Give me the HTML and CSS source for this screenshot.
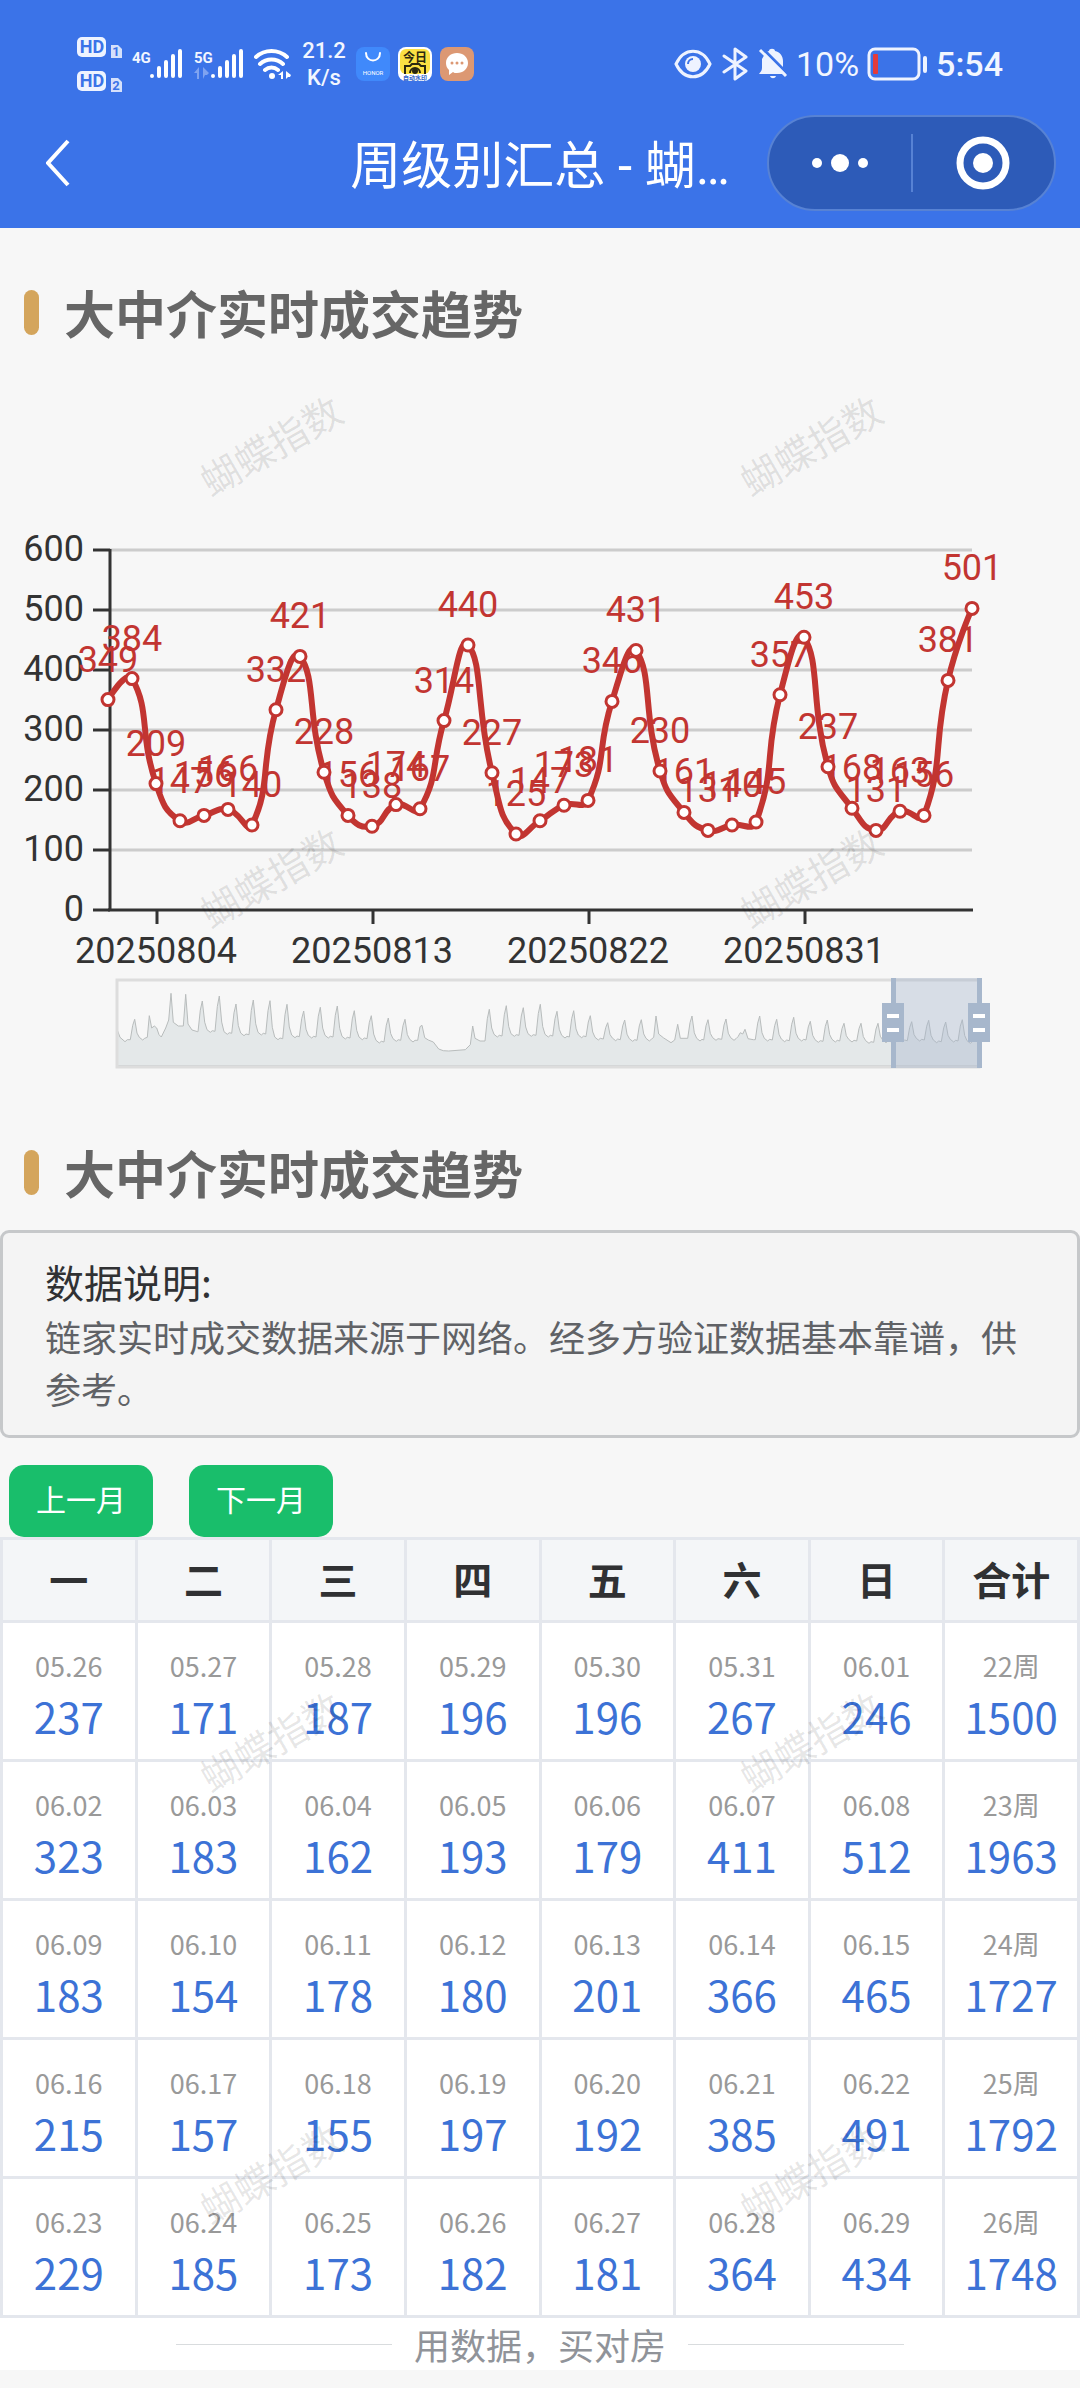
FILE: index.html
```html
<!DOCTYPE html>
<html lang="zh-CN">
<head>
  <meta charset="UTF-8">
  <title>周级别汇总 - 蝴蝶指数</title>
  <meta name="viewport" content="width=device-width, initial-scale=1">
  <link rel="stylesheet" href="styles.css">
</head>
<body>

<header class="header">
  <div class="status">
    <div class="status-left">
      <svg width="45" height="56" viewBox="0 0 45 56">
        <rect x="0" y="1" width="29" height="20" rx="5" fill="#eef3ff"/>
        <text class="hd" x="15" y="17" text-anchor="middle">HD</text>
        <path d="M34 9h7l4 4v9H34z" fill="#d5e0fb"/>
        <text class="sim" x="39" y="20" text-anchor="middle">1</text>
        <rect x="0" y="35" width="29" height="20" rx="5" fill="#eef3ff"/>
        <text class="hd" x="15" y="51" text-anchor="middle">HD</text>
        <path d="M34 42h7l4 4v10H34z" fill="#d5e0fb"/>
        <text class="sim" x="39" y="54" text-anchor="middle">2</text>
      </svg>
      <svg width="52" height="32" viewBox="0 0 52 32">
        <text class="net" x="0" y="15">4G</text>
        <path class="bars" d="M20 28v0M27 20v8M34 14v14M41 8v20M48 3v25"/>
      </svg>
      <svg width="50" height="32" viewBox="0 0 50 32">
        <text class="net" x="0" y="15">5G</text>
        <path d="M0 25l5-6v12H3v-6zM9 31V19l6 6-2 2h-2z" fill="#7fa3f0"/>
        <path class="bars" d="M19 28v0M26 20v8M33 14v14M40 8v20M47 3v25"/>
      </svg>
      <svg width="38" height="32" viewBox="0 0 38 32">
        <path d="M2 9a23 23 0 0 1 31 0M6 16a17 17 0 0 1 23 0M11 22a10 10 0 0 1 13 0" fill="none" stroke="#fff" stroke-width="4" stroke-linecap="round"/>
        <circle cx="18" cy="28" r="3" fill="#fff"/>
        <path d="M24 27l5-4v8h-2v-4zM32 31v-8l5 4-1 2h-2z" fill="#fff"/>
      </svg>
      <div class="speed">21.2<br>K/s</div>
      <div class="apps">
        <svg width="34" height="34" viewBox="0 0 34 34">
          <rect width="34" height="34" rx="8" fill="#4089fb"/>
          <path d="M10 6c0 10 14 10 14 0" fill="none" stroke="#fff" stroke-width="2" stroke-linecap="round"/>
          <text x="17" y="28" text-anchor="middle" font-size="6" fill="#fff">HONOR</text>
        </svg>
        <svg width="34" height="34" viewBox="0 0 34 34">
          <rect width="34" height="34" rx="8" fill="#fff"/>
          <rect x="2" y="2" width="30" height="25" rx="6" fill="#fbe043"/>
          <text x="17" y="15" text-anchor="middle" font-size="12" font-weight="bold" fill="#2b2710">今日</text>
          <path d="M7 27v-8h5l2-2h7l2 2h4v8M12 26a5 5 0 0 1 10 0" fill="none" stroke="#2b2710" stroke-width="2"/>
          <circle cx="17" cy="24" r="3" fill="#2b2710"/>
          <text x="17" y="33" text-anchor="middle" font-size="6" font-weight="bold" fill="#2f62c9">自动水印</text>
        </svg>
        <svg width="34" height="34" viewBox="0 0 34 34">
          <rect width="34" height="34" rx="8" fill="#dc9873"/>
          <path d="M17 6c6 0 11 4 11 10s-5 10-11 10c-2 0-3 0-4-1l-4 3v-5c-2-2-3-4-3-7 0-6 5-10 11-10z" fill="#fff"/>
          <g fill="#dc9873"><circle cx="12" cy="16" r="1.500"/><circle cx="17" cy="16" r="1.500"/><circle cx="22" cy="16" r="1.500"/></g>
        </svg>
      </div>
    </div>
    <div class="status-right">
      <svg width="38" height="30" viewBox="0 0 38 30">
        <path d="M2 15C10-2 28-2 36 15 28 32 10 32 2 15z" fill="none" stroke="#eef3ff" stroke-width="3"/>
        <circle cx="19" cy="15" r="8" fill="#eef3ff"/>
        <path d="M14 15a5 5 0 0 1 5-5" fill="none" stroke="#3b73e8" stroke-width="2"/>
      </svg>
      <svg width="30" height="34" viewBox="0 0 30 34">
        <path d="M4 9l22 15-11 8V2l11 8L4 25" fill="none" stroke="#eef3ff" stroke-width="3" stroke-linejoin="round" stroke-linecap="round"/>
      </svg>
      <svg width="30" height="34" viewBox="0 0 30 34">
        <path d="M8 5l3-1c0-3 6-3 6 0 5 1 8 5 8 10v8l3 5H1c1-2 3-3 3-6V12zM12 29h6c-1 3-5 3-6 0z" fill="#eef3ff"/>
        <path d="M4 1l26 26" stroke="#3b73e8" stroke-width="3"/>
        <path d="M2 3l26 26" stroke="#eef3ff" stroke-width="3"/>
      </svg>
      <span>10%</span>
      <svg width="61" height="34" viewBox="0 0 61 34">
        <rect x="2" y="2" width="50" height="30" rx="6" fill="none" stroke="#eef3ff" stroke-width="3"/>
        <rect x="6" y="7" width="5" height="20" rx="1" fill="#e33b3b"/>
        <path d="M58 11v13" stroke="#eef3ff" stroke-width="4" stroke-linecap="round"/>
      </svg>
      <span class="time">5:54</span>
    </div>
  </div>

  <div class="nav">
    <button class="back" aria-label="返回">
      <svg width="24" height="48" viewBox="0 0 24 48"><path d="M22 2L2 24l20 22" fill="none" stroke="#fff" stroke-width="4"/></svg>
    </button>
    <h1>周级别汇总 - 蝴…</h1>
    <div class="capsule">
      <button aria-label="更多">
        <svg width="58" height="20" viewBox="0 0 58 20" fill="#fff"><circle cx="6" cy="10" r="5"/><circle cx="29" cy="10" r="9"/><circle cx="52" cy="10" r="5"/></svg>
      </button>
      <button aria-label="关闭">
        <svg width="54" height="54" viewBox="0 0 54 54"><circle cx="27" cy="27" r="23" fill="none" stroke="#fff" stroke-width="7"/><circle cx="27" cy="27" r="10" fill="#fff"/></svg>
      </button>
    </div>
  </div>
</header>

<main class="main">
  <h2>大中介实时成交趋势</h2>
  <svg id="chart" class="chart" viewBox="0 0 1080 718"></svg>

  <h2>大中介实时成交趋势</h2>
  <div class="info">
    <p class="info-title">数据说明:</p>
    <p>链家实时成交数据来源于网络。经多方验证数据基本靠谱，供参考。</p>
  </div>

  <div class="actions">
    <button type="button">上一月</button>
    <button type="button">下一月</button>
  </div>

  <table class="calendar">
    <thead>
      <tr><th>一</th><th>二</th><th>三</th><th>四</th><th>五</th><th>六</th><th>日</th><th>合计</th></tr>
    </thead>
    <tbody>
      <tr>
        <td><span>05.26</span><b>237</b></td><td><span>05.27</span><b>171</b></td><td><span>05.28</span><b>187</b></td><td><span>05.29</span><b>196</b></td>
        <td><span>05.30</span><b>196</b></td><td><span>05.31</span><b>267</b></td><td><span>06.01</span><b>246</b></td><td><span>22周</span><b>1500</b></td>
      </tr>
      <tr>
        <td><span>06.02</span><b>323</b></td><td><span>06.03</span><b>183</b></td><td><span>06.04</span><b>162</b></td><td><span>06.05</span><b>193</b></td>
        <td><span>06.06</span><b>179</b></td><td><span>06.07</span><b>411</b></td><td><span>06.08</span><b>512</b></td><td><span>23周</span><b>1963</b></td>
      </tr>
      <tr>
        <td><span>06.09</span><b>183</b></td><td><span>06.10</span><b>154</b></td><td><span>06.11</span><b>178</b></td><td><span>06.12</span><b>180</b></td>
        <td><span>06.13</span><b>201</b></td><td><span>06.14</span><b>366</b></td><td><span>06.15</span><b>465</b></td><td><span>24周</span><b>1727</b></td>
      </tr>
      <tr>
        <td><span>06.16</span><b>215</b></td><td><span>06.17</span><b>157</b></td><td><span>06.18</span><b>155</b></td><td><span>06.19</span><b>197</b></td>
        <td><span>06.20</span><b>192</b></td><td><span>06.21</span><b>385</b></td><td><span>06.22</span><b>491</b></td><td><span>25周</span><b>1792</b></td>
      </tr>
      <tr>
        <td><span>06.23</span><b>229</b></td><td><span>06.24</span><b>185</b></td><td><span>06.25</span><b>173</b></td><td><span>06.26</span><b>182</b></td>
        <td><span>06.27</span><b>181</b></td><td><span>06.28</span><b>364</b></td><td><span>06.29</span><b>434</b></td><td><span>26周</span><b>1748</b></td>
      </tr>
    </tbody>
  </table>

  <footer class="slogan">用数据，买对房</footer>

  <div class="watermark" aria-hidden="true">
    <span>蝴蝶指数</span><span>蝴蝶指数</span>
    <span>蝴蝶指数</span><span>蝴蝶指数</span>
    <span>蝴蝶指数</span><span>蝴蝶指数</span>
    <span>蝴蝶指数</span><span>蝴蝶指数</span>
    <span>蝴蝶指数</span><span>蝴蝶指数</span>
  </div>
</main>

<script src="chart.js"></script>
</body>
</html>
```

FILE: styles.css
```css
* {
  box-sizing: border-box;
}
body {
  margin: 0;
  min-height: 100vh;
  background: #f7f7f7;
  color: #303133;
  font-family: "Noto Sans CJK SC", sans-serif;
}
h1, h2, p {
  margin: 0;
}
button {
  padding: 0;
  border: none;
  background: none;
  color: #fff;
  font-family: inherit;
  cursor: pointer;
}
svg {
  display: block;
}

/* 顶部状态栏和导航 */
.header {
  padding-top: 34px;
  background: #3b73e8;
  color: #f2f6ff;
}
.status {
  display: flex;
  justify-content: space-between;
  height: 60px;
  padding: 0 77px;
  font-family: Roboto, "Noto Sans CJK SC", sans-serif;
}
.status-left {
  display: flex;
  align-items: center;
  gap: 10px;
}
.status-right {
  display: flex;
  align-items: center;
  gap: 8px;
  font-size: 34px;
}
.time {
  font-weight: 500;
}
.hd {
  font-size: 18px;
  font-weight: bold;
  fill: #3b73e8;
}
.sim {
  font-size: 13px;
  font-weight: bold;
  fill: #3b73e8;
}
.net {
  font-size: 15px;
  font-weight: bold;
  fill: #f2f6ff;
}
.bars {
  stroke: #fff;
  stroke-width: 4;
  stroke-linecap: round;
}
.speed {
  width: 44px;
  font-size: 22px;
  font-weight: 500;
  line-height: 27px;
  text-align: center;
}
.apps {
  display: flex;
  gap: 8px;
}
.nav {
  display: grid;
  grid-template-columns: 1fr auto 1fr;
  align-items: center;
  padding: 21px 24px 17px;
}
.nav h1 {
  padding-top: 8px;
  color: #fff;
  font-family: Roboto, "Noto Sans CJK SC", sans-serif;
  font-size: 51px;
  font-weight: normal;
  line-height: 72px;
  white-space: nowrap;
}
.back {
  justify-self: start;
  padding-left: 22px;
}
.capsule {
  display: flex;
  justify-self: end;
  align-items: center;
  width: 289px;
  height: 96px;
  border: 2px solid #5782d4;
  border-radius: 48px;
  background: #2d5bb8;
}
.capsule button {
  display: flex;
  flex: 1;
  align-items: center;
  justify-content: center;
  height: 58px;
}
.capsule button + button {
  border-left: 2px solid #5782d4;
}

/* 内容 */
.main {
  position: relative;
  overflow: hidden;
}
.main h2 {
  display: flex;
  align-items: center;
  gap: 25px;
  padding: 48px 24px 22px;
  color: #666;
  font-size: 51px;
  line-height: 72px;
}
.main h2::before {
  content: "";
  width: 15px;
  height: 45px;
  border-radius: 8px;
  background: #d4a55c;
}
.chart {
  width: 100%;
  height: auto;
  font-family: Roboto, sans-serif;
  font-size: 36px;
}
.axis {
  stroke: #333;
  stroke-width: 3;
}
.split {
  stroke: #ccc;
  stroke-width: 3;
}
.axis-label {
  fill: #333;
}
.line {
  fill: none;
  stroke: #c23531;
  stroke-width: 6;
}
.point {
  fill: #fff;
  stroke: #c23531;
  stroke-width: 3;
}
.value {
  fill: #c23531;
}
.overview {
  fill: #e4e8e9;
  stroke: #b8bcbc;
  stroke-width: 1;
}
.frame {
  fill: none;
  stroke: #ddd;
  stroke-width: 3;
}
.range {
  fill: #a7b7cc;
  fill-opacity: 0.4;
}
.handle {
  fill: #a7b7cc;
}
.grip {
  stroke: #fff;
  stroke-width: 4;
}

.info {
  position: relative;
  z-index: 2;
  padding: 19px 42px 21px;
  border: 3px solid #c6c8ca;
  border-radius: 9px;
  background: #f4f4f4;
  color: #606266;
  font-size: 36px;
  line-height: 52px;
}
.info-title {
  color: #303133;
  font-size: 39px;
  line-height: 58px;
}
.actions {
  display: flex;
  gap: 36px;
  padding: 27px 9px 0;
}
.actions button {
  width: 144px;
  height: 72px;
  padding-bottom: 6px;
  border-radius: 15px;
  background: #19be6b;
  font-size: 30px;
}

.calendar {
  width: 100%;
  border-collapse: collapse;
  table-layout: fixed;
  background: #fff;
  text-align: center;
}
.calendar th,
.calendar td {
  border: 3px solid #e4e7ed;
}
.calendar th {
  padding: 8px 0 12px;
  background: #f4f6f8;
  font-size: 39px;
  line-height: 60px;
}
.calendar td {
  padding: 23px 0 13px;
}
.calendar span,
.calendar b {
  display: block;
}
.calendar span {
  color: #999;
  font-size: 27px;
  line-height: 40px;
}
.calendar b {
  color: #3c72d6;
  font-size: 42px;
  font-weight: normal;
  line-height: 60px;
}

.slogan {
  display: flex;
  align-items: center;
  justify-content: center;
  gap: 22px;
  background: #fff;
  color: #909399;
  font-size: 36px;
  line-height: 52px;
}
.slogan::before,
.slogan::after {
  content: "";
  width: 20%;
  height: 1px;
  background: #d9dcde;
}

/* 水印 */
.watermark {
  position: absolute;
  inset: 0;
  z-index: 1;
  display: grid;
  grid-template-columns: 1fr 1fr;
  grid-auto-rows: 432px;
  place-items: center;
  color: rgba(0, 0, 0, 0.1);
  font-size: 39px;
  pointer-events: none;
}
.watermark span {
  transform: rotate(-30deg);
}
```

FILE: chart.js
```javascript
const values = [
  349, 384, 209, 147, 156, 166, 140, 332, 421, 228, 156, 138, 174, 167,
  314, 440, 227, 125, 147, 173, 181, 346, 431, 230, 161, 131, 140, 145,
  357, 453, 237, 168, 131, 163, 156, 381, 501
];
const xLabels = { 2: '20250804', 11: '20250813', 20: '20250822', 29: '20250831' };

const left = 108;
const step = 24;
const bottom = 540;
const right = left + step * (values.length - 1);
const points = values.map((v, i) => [left + i * step, bottom - 1 - v * 0.6]);

// 平滑曲线
function smoothPath(pts) {
  const smooth = 0.5;
  let d = 'M' + pts[0];
  let prevCtrl = pts[0];
  for (let i = 1; i < pts.length; i++) {
    const p = pts[i];
    const prev = pts[i - 1];
    const next = pts[i + 1];
    let c1 = p;
    let c2 = p;
    if (next) {
      const dPrev = Math.hypot(p[0] - prev[0], p[1] - prev[1]);
      const dNext = Math.hypot(p[0] - next[0], p[1] - next[1]);
      const ratio = dNext / (dPrev + dNext);
      const v = [next[0] - prev[0], next[1] - prev[1]];
      c1 = [p[0] - v[0] * smooth * (1 - ratio), p[1] - v[1] * smooth * (1 - ratio)];
      c2 = [p[0] + v[0] * smooth * ratio, p[1] + v[1] * smooth * ratio];
    }
    d += 'C' + prevCtrl + ' ' + c1 + ' ' + p;
    prevCtrl = c2;
  }
  return d;
}

// 缩略图：三个数是一周 [峰值x, 峰值y, 之后的谷值y]，两个数是普通点
const weeks = [
  [50, 205], [60, 232], [75, 245], [82, 239], [104, 178, 237], [142, 232], [148, 167], [155, 204], [163, 198], [170, 204],
  [177, 224], [184, 231], [197, 204], [206, 180], [213, 100], [220, 187], [235, 198], [250, 198], [257, 103], [264, 192],
  [276, 210], [293, 215], [307, 123, 214], [358, 108, 220], [408, 132, 224], [460, 120, 222], [510, 122, 236],
  [561, 133, 230], [611, 153, 231], [661, 142, 231], [712, 138, 234], [763, 152, 236], [814, 167, 246],
  [865, 174, 241], [915, 178, 243], [953, 241], [960, 200], [966, 196], [974, 233], [985, 240], [1000, 246],
  [1016, 267], [1030, 272], [1046, 273], [1096, 269], [1111, 254], [1118, 198], [1125, 235], [1140, 243],
  [1168, 148, 228], [1219, 137, 226], [1270, 143, 226], [1321, 133, 228], [1371, 154, 231], [1421, 152, 230],
  [1471, 167, 237], [1523, 188, 239], [1574, 180, 241], [1624, 179, 240], [1661, 232], [1668, 168], [1676, 222],
  [1690, 233], [1713, 248], [1724, 240], [1733, 193], [1741, 235], [1763, 235], [1776, 168, 240], [1824, 179, 238],
  [1878, 177, 238], [1914, 230], [1921, 218], [1928, 222], [1935, 208], [1944, 236], [1960, 239], [1979, 168, 240],
  [2030, 178, 242], [2081, 172, 240], [2131, 184, 244], [2182, 180, 243], [2232, 190, 243], [2283, 190, 247],
  [2334, 190, 245], [2384, 185, 242], [2435, 185, 240], [2486, 181, 245], [2537, 186, 243], [2587, 179, 247], [2625, 225], [2638, 175]
];
function overviewPath() {
  const out = [];
  let valley = 240;
  weeks.forEach(([x, y, low]) => {
    if (low === undefined) {
      out.push([x, y]);
      valley = y;
      return;
    }
    out.push([x - 13, valley], [x - 6, y + (valley - y) * 0.3], [x, y]);
    out.push([x + 7, y + (low - y) * 0.7], [x + 14, low - 5], [x + 24, low + 3], [x + 30, low - 2]);
    valley = low;
  });
  const line = out.map(([x, y]) => (100 + x / 3).toFixed(1) + ',' + (590 + y / 3).toFixed(1));
  return 'M117,696L' + line.join('L') + 'L979,696Z';
}

let html = '';
for (let v = 0; v <= 600; v += 100) {
  const y = bottom - v * 0.6;
  if (v > 0) {
    html += `<path class="split" d="M110 ${y}H${right}"/>`;
  }
  html += `<path class="axis" d="M93 ${y}h17"/>`;
  html += `<text class="axis-label" x="84" y="${y + 11}" text-anchor="end">${v}</text>`;
}
html += `<path class="axis" d="M110 179V${bottom}M108 ${bottom}H${right + 1}"/>`;
for (const i in xLabels) {
  const x = left + i * step;
  html += `<path class="axis" d="M${x + 1} ${bottom}v14"/>`;
  html += `<text class="axis-label" x="${x}" y="593" text-anchor="middle">${xLabels[i]}</text>`;
}

html += `<path class="line" d="${smoothPath(points)}"/>`;
points.forEach(([x, y], i) => {
  html += `<text class="value" x="${x}" y="${y - 28}" text-anchor="middle">${values[i]}</text>`;
});
points.forEach(([x, y]) => {
  html += `<circle class="point" cx="${x}" cy="${y}" r="6"/>`;
});

html += `<path class="overview" d="${overviewPath()}"/>`;
html += '<rect class="frame" x="117" y="610" width="862" height="87"/>';
html += '<rect class="range" x="893" y="608" width="86" height="90"/>';
[893, 979].forEach(x => {
  html += `<path class="handle" d="M${x - 2} 608h5v90h-5zM${x - 11} 633h22v39h-22z"/>`;
  html += `<path class="grip" d="M${x - 6} 646h12M${x - 6} 660h12"/>`;
});

document.getElementById('chart').innerHTML = html;
```
